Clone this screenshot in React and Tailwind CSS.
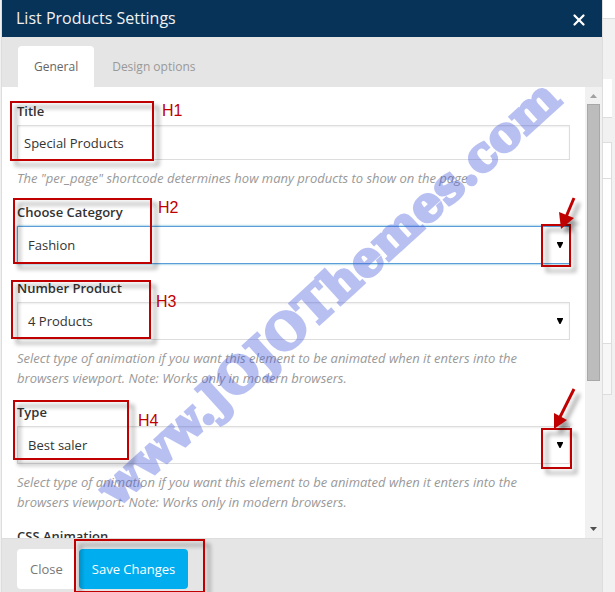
import { X } from "lucide-react";

function Field({ id, label, hint, children }) {
  return (
    <div className="flex flex-col">
      <label htmlFor={id} className="mb-1 text-[13px] leading-5 font-semibold text-[#333]">{label}</label>
      {children}
      {hint && <p className="mt-2 text-[13px] leading-5 text-[#999] italic">{hint}</p>}
    </div>
  );
}

function Select({ id, value, focused }) {
  return (
    <div className="relative">
      <select
        id={id}
        className={
          "h-[38px] w-full appearance-none border bg-white px-[10px] pt-[2px] text-[13px] text-[#333] outline-none " +
          (focused ? "border-[#5b9dd9] shadow-[0_0_2px_rgba(30,140,190,0.8)]" : "border-[#ddd] shadow-[inset_0_1px_2px_rgba(0,0,0,0.07)]")
        }
      >
        <option>{value}</option>
      </select>
      <svg className="pointer-events-none absolute top-4 right-[7px] h-[6px] w-[6px]" viewBox="0 0 6 6">
        <path d="M0 0H6V1L3.500 6H2.500L0 1Z" fill="#000" />
      </svg>
    </div>
  );
}

function Frame({ className }) {
  return <div className={"absolute border-2 border-[#c00000] drop-shadow-[5px_5px_2px_rgba(0,0,0,0.4)] " + className} />;
}

function Tag({ className, children }) {
  return <span className={"absolute font-['Liberation_Sans',sans-serif] text-base leading-5 text-[#c00000] " + className}>{children}</span>;
}

const animationHint =
  "Select type of animation if you want this element to be animated when it enters into the browsers viewport. Note: Works only in modern browsers.";

export default function App() {
  return (
    <div className="relative flex h-screen overflow-hidden bg-[#f1f1f1] font-['Open_Sans',sans-serif]">
      <div className="w-[2px] shrink-0 border-r border-[#ddd]" />
      <main className="flex min-w-0 flex-1 flex-col bg-white">
        <header className="flex h-[37px] shrink-0 items-center justify-between bg-[#083358] pr-[14px] pb-[2px] pl-[14px] text-white">
          <h1 className="text-base text-[#f1f1f1]">List Products Settings</h1>
          <button aria-label="Close dialog" className="mt-1">
            <X size={18} strokeWidth={3} />
          </button>
        </header>
        <nav className="flex h-[50px] shrink-0 items-end bg-[#e5e5e5] pl-4 text-xs">
          <button className="h-[41px] rounded-t bg-white px-4 text-[#666]">General</button>
          <button className="h-[41px] px-[18px] text-[#999]">Design options</button>
        </nav>
        <div className="flex min-h-0 flex-1">
          <form className="flex min-w-0 flex-1 flex-col gap-[14px] overflow-hidden px-[15px] pt-[14px]">
            <Field id="title" label="Title" hint={'The "per_page" shortcode determines how many products to show on the page'}>
              <input
                id="title"
                defaultValue="Special Products"
                className="h-[35px] w-full border border-[#ddd] px-[6px] text-[13px] text-[#333] shadow-[inset_0_1px_2px_rgba(0,0,0,0.07)] outline-none"
              />
            </Field>
            <Field id="category" label="Choose Category">
              <Select id="category" value="Fashion" focused />
            </Field>
            <Field id="number" label="Number Product" hint={animationHint}>
              <Select id="number" value="4 Products" />
            </Field>
            <Field id="type" label="Type" hint={animationHint}>
              <Select id="type" value="Best saler" />
            </Field>
            <Field id="animation" label="CSS Animation">
              <Select id="animation" value="No" />
            </Field>
          </form>
          <div className="flex w-[17px] shrink-0 flex-col items-center bg-[#f1f1f1]">
            <svg className="h-[17px] w-[17px] shrink-0" viewBox="0 0 17 17">
              <path d="M5 11L8.500 7L12 11Z" fill="#a0a0a0" />
            </svg>
            <div className="h-[277px] w-[13px] border border-[#a8a8a8] bg-[#bcbcbc]" />
            <svg className="mt-auto h-[17px] w-[17px] shrink-0" viewBox="0 0 17 17">
              <path d="M5 6L8.500 10L12 6Z" fill="#505050" />
            </svg>
          </div>
        </div>
        <footer className="flex h-[54px] shrink-0 items-center gap-[3px] border-t border-[#ddd] bg-[#e5e5e5] px-[15px] pt-[6px] text-[13px]">
          <button className="h-10 rounded bg-white px-[13px] pt-[2px] text-[#777]">Close</button>
          <button className="h-10 rounded bg-[#00aef0] px-[13px] pt-[2px] text-white">Save Changes</button>
        </footer>
      </main>
      <aside className="flex w-[13px] shrink-0 flex-col border-l border-[#ddd] pr-[3px]">
        <div className="-mr-[3px] h-[19px] shrink-0 border-b border-[#ddd] bg-white" />
        <div className="mt-[60px] h-[39px] shrink-0 border-b border-[#ddd] bg-white" />
        <div className="mt-6 h-[37px] shrink-0 border border-l-0 border-[#ddd] bg-white" />
        <div className="h-[165px] shrink-0 border-r border-b border-[#ddd] bg-white" />
        <div className="h-[51px] shrink-0 border-r border-b border-[#ddd] bg-[#f7f7f7]" />
      </aside>

      <div className="pointer-events-none absolute inset-0">
        <svg className="absolute top-0 left-0 h-[592px] w-[615px]" viewBox="0 0 615 592">
          <text
            x="117"
            y="508"
            transform="rotate(-42.3 117 508)"
            fontFamily="DejaVu Serif, serif"
            fontWeight="bold"
            fontSize="48"
            fill="#4257dc"
            stroke="#4257dc"
            strokeWidth="3"
            opacity="0.37"
          >
            www.JOJOThemes.com
          </text>
        </svg>
        <Frame className="top-[101px] left-[10px] h-[60px] w-[144px]" />
        <Frame className="top-[198px] left-[13px] h-[66px] w-[139px]" />
        <Frame className="top-[280px] left-[11px] h-[59px] w-[140px]" />
        <Frame className="top-[400px] left-[13px] h-[60px] w-[116px]" />
        <Frame className="top-[539px] left-[74px] h-[54px] w-[131px]" />
        <Frame className="top-[224px] right-[44px] h-[43px] w-[30px]" />
        <Frame className="top-[428px] right-[43px] h-[41px] w-[31px]" />
        <Tag className="top-[101px] left-[162px]">H1</Tag>
        <Tag className="top-[198px] left-[158px]">H2</Tag>
        <Tag className="top-[292px] left-[156px]">H3</Tag>
        <Tag className="top-[411px] left-[138px]">H4</Tag>
        <svg className="absolute top-[190px] right-[25px] h-[50px] w-[50px] drop-shadow-[5px_5px_2px_rgba(0,0,0,0.4)]" viewBox="540 190 50 50">
          <path d="M574 198L566 217" stroke="#c00000" strokeWidth="3" />
          <path d="M559 212L574 218L561 229Z" fill="#c00000" />
        </svg>
        <svg className="absolute top-[380px] right-[25px] h-[60px] w-[50px] drop-shadow-[5px_5px_2px_rgba(0,0,0,0.4)]" viewBox="540 380 50 60">
          <path d="M574 389L560 417" stroke="#c00000" strokeWidth="3" />
          <path d="M554 413L567 420L554 429Z" fill="#c00000" />
        </svg>
      </div>
    </div>
  );
}
